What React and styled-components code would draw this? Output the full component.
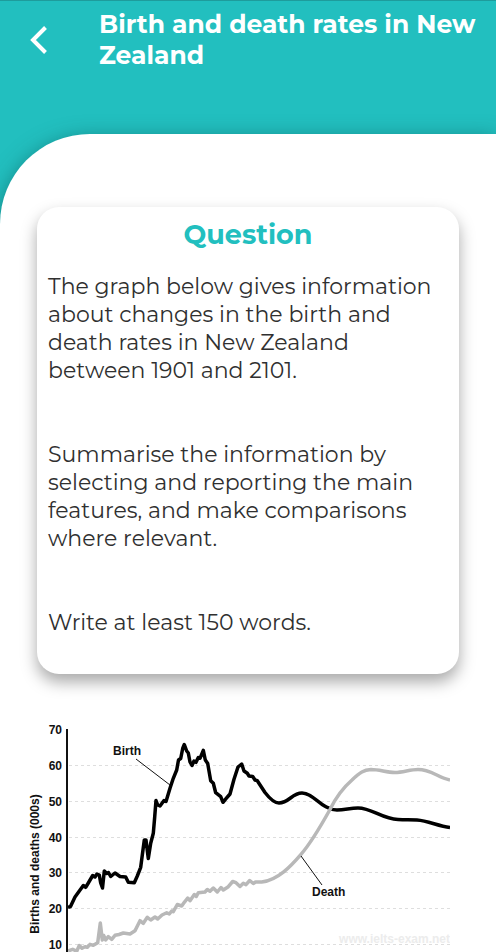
import React from "react";
import styled, { createGlobalStyle } from "styled-components";

const GlobalStyle = createGlobalStyle`
  *, *::before, *::after { box-sizing: border-box; }
  body {
    margin: 0;
    background: #22bfbf;
    font-family: Montserrat, Inter, sans-serif;
  }
`;

const Screen = styled.div`
  overflow: hidden;
  border-top: 1px solid #1e9c9c;
  background: #22bfbf;
`;

const Header = styled.header`
  display: flex;
  align-items: flex-start;
  min-height: 133px;
  padding: 8px 16px 0 20px;
`;

const BackButton = styled.button`
  display: grid;
  place-items: center;
  flex: none;
  width: 40px;
  height: 40px;
  margin: 10px 39px 0 0;
  padding: 0;
  border: 0;
  background: none;
  color: #fff;
`;

const Title = styled.h1`
  margin: 0;
  color: #fff;
  font-size: 25px;
  font-weight: 700;
  line-height: 31px;
`;

const Panel = styled.main`
  padding-top: 73px;
  border-top-left-radius: 90px;
  background: #fff;
  box-shadow: 0 4px 20px rgba(0, 70, 70, 0.5);
`;

const Card = styled.section`
  margin: 0 37px;
  padding: 12px 11px 37px;
  border-radius: 22px;
  background: #fff;
  box-shadow: 0 8px 16px rgba(0, 0, 0, 0.34);
`;

const CardTitle = styled.h2`
  margin: 0 0 23px;
  color: #22bfbf;
  font-size: 27px;
  font-weight: 700;
  line-height: 31px;
  text-align: center;
`;

const Paragraph = styled.p`
  margin: 0;
  color: #303030;
  font-size: 22px;
  font-weight: 400;
  line-height: 28px;

  & + & { margin-top: 56px; }
`;

const Figure = styled.figure`
  margin: 0;
  padding: 46px 46px 0 28px;
`;

const Chart = styled.svg`
  display: block;
  width: 100%;
  height: auto;
`;

const ChartText = styled.text`
  fill: ${(p) => p.$fill || "#111"};
  font-family: "Liberation Sans", Arial, sans-serif;
  font-size: 12px;
  font-weight: 700;
  text-anchor: ${(p) => p.$anchor || "start"};
`;

const SeriesLine = styled.path`
  fill: none;
  stroke: ${(p) => p.$color};
  stroke-width: 3.5;
  stroke-linejoin: round;
`;

const ticks = [
  { value: 70, y: 730 },
  { value: 60, y: 766 },
  { value: 50, y: 802 },
  { value: 40, y: 838 },
  { value: 30, y: 873 },
  { value: 20, y: 909 },
  { value: 10, y: 945 },
];

const birthLine =
  "M68 907.3L70.5 906.5L75 897L83.3 885.5L85.7 887.3L88.3 883L92.7 875.5L95 877L97 874L99.3 875L100.7 883L102.5 888L104.3 871L106.7 873.5L108.5 872.5L110.7 876.5L115 873L120 876.5L125.7 877L128.3 882.3L134.3 882.7L137.3 876L140.7 867.3L142.3 855L144.3 840H146L148.3 858.5L150.7 843.3L153.3 833.3L154.7 817L156 800.5L157.7 805L160 806L164 800.5L166 801.5L170 788.3L173.3 778.3L176.7 770L178.5 760L180.7 758.5L182.7 748.5L184.3 744.5L186.7 751L188.3 753L190 762L192 765.5L194 761L196 762.3L198.3 757.5L200 758.3L203.3 750.3L205.3 760L207.7 763.5L210.7 780.7L213.3 783.3L215.7 792.7L220.7 796.7L223 802.3L226 798.7L230 794L234 779.3L238 767L241.7 764L244 771L247.3 773.3L249 776L252.7 776.5L255 780L257.3 780.7L265 792.5C270 799 274 803 279 803C289 803 292 793 302 793C314 793 322 810 337 810C345 810 350 808 358 808C372 808 382 819 398 819.5C406 820 410 819.5 417 820C428 820.7 438 826 450 827.5";

const deathLine =
  "M68 951L72.7 949.3L76.7 951.3L79.3 945.5L82 948.3L85 946.7L87.3 947.3L90 944.3L93.3 945.3L97.7 942.7L100.3 923L102.3 940L103.7 935.5L105.7 940L108.3 936.7L111.7 939.3L115 935.3L119 934.5L123.3 933L130 934L135 930.7L140 920.7L143.3 923.3L147.3 917.3L150.7 920L155 917L157.7 919L162 915L166.7 912.7L169.3 914L171.7 911L173.3 911.7L177.3 904.5L181.7 906L184.3 902.3L187.7 898L190 900.7L194.3 894.5L196.3 896.5L198.3 892.7L205 892L207.3 889.5L210 891.3L213.3 888L217.3 892L221 887.5L223.3 890L228.3 886.7L232.7 881.5L236 882.7L240 886.5L243.3 883.3L246 884.7L249.7 880.5L253.3 883.5L255.5 882L261.7 882C278 880 291 866 301 854.3C310 844 320 827.5 330 809.5C337 795 344 787 352 780C360 772 364 770 371 769.5C380 769.5 386 772.5 395 772.5C403 772.5 410 769.5 418 769.5C431 769.5 437 777 450 780";

function RatesChart() {
  return (
    <Chart viewBox="28 720 422 232" role="img" aria-label="Births and deaths in New Zealand, in thousands">
      {ticks.slice(1).map(({ value, y }) => (
        <path key={value} d={`M69 ${y - 0.5}H450`} stroke="#dedede" strokeDasharray="3 3" />
      ))}
      <ChartText $fill="#ececec" $anchor="end" x="450" y="943">www.ielts-exam.net</ChartText>
      <SeriesLine $color="#000" d={birthLine} />
      <SeriesLine $color="#b8b8b8" d={deathLine} />
      <path d="M67 729V952" stroke="#111" strokeWidth="2" />
      <path d="M136 759L170 785M301 856L322 885" stroke="#111" strokeWidth="1" />
      {ticks.map(({ value, y }) => (
        <ChartText key={value} $anchor="end" x="62" y={y + 4}>{value}</ChartText>
      ))}
      <ChartText x="113" y="755">Birth</ChartText>
      <ChartText x="312" y="896">Death</ChartText>
      <ChartText $anchor="middle" transform="translate(39 864) rotate(-90)">
        Births and deaths (000s)
      </ChartText>
    </Chart>
  );
}

export default function App() {
  return (
    <>
      <GlobalStyle />
      <Screen>
        <Header>
          <BackButton type="button" aria-label="Back">
            <svg width="40" height="40" viewBox="0 0 40 40" fill="none" stroke="currentColor" strokeWidth="4">
              <path d="M25.5 8.5L13 21L25.5 33.5" />
            </svg>
          </BackButton>
          <Title>Birth and death rates in New Zealand</Title>
        </Header>
        <Panel>
          <Card>
            <CardTitle>Question</CardTitle>
            <Paragraph>
              The graph below gives information about changes in the birth and death rates in New
              Zealand between 1901 and 2101.
            </Paragraph>
            <Paragraph>
              Summarise the information by selecting and reporting the main features, and make
              comparisons where relevant.
            </Paragraph>
            <Paragraph>Write at least 150 words.</Paragraph>
          </Card>
          <Figure>
            <RatesChart />
          </Figure>
        </Panel>
      </Screen>
    </>
  );
}
